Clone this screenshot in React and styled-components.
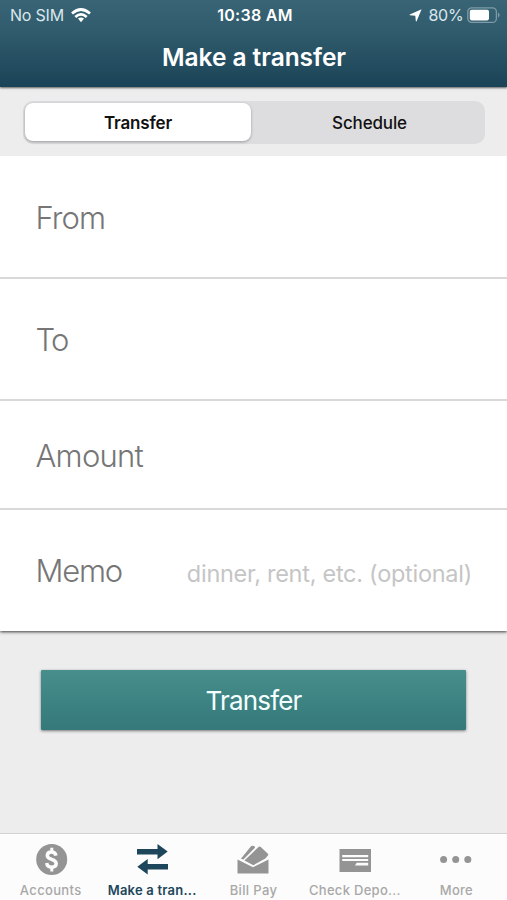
import React from 'react';
import styled, { createGlobalStyle } from 'styled-components';

const GlobalStyle = createGlobalStyle`
  * { box-sizing: border-box; }
  body { margin: 0; background: #ededed; }
  button, input { font: inherit; border: 0; margin: 0; padding: 0; background: none; }
`;

const Screen = styled.div`
  width: 507px;
  height: 900px;
  display: flex;
  flex-direction: column;
  background: #ededed;
  font-family: Inter, 'Liberation Sans', sans-serif;
  overflow: hidden;
`;

const Header = styled.header`
  height: 87px;
  flex: none;
  color: #fff;
  background: linear-gradient(#386475 0%, #305c6d 35%, #1b4357 100%);
  box-shadow: 0 1px 2px rgba(0, 0, 0, 0.6);
`;

const StatusBar = styled.div`
  height: 30px;
  display: grid;
  grid-template-columns: 1fr auto 1fr;
  align-items: center;
  padding: 0 7px 0 10px;
  font-size: 16px;
  line-height: 30px;
`;

const StatusGroup = styled.div`
  display: flex;
  align-items: center;
  justify-content: ${(p) => (p.$end ? 'flex-end' : 'flex-start')};
  gap: ${(p) => (p.$end ? '3.5px' : '7px')};
  color: #dbe7ec;
  letter-spacing: -0.2px;
  svg { flex: none; }
`;

const BatteryLevel = styled.span`
  margin-left: 3px;
`;

const Clock = styled.div`
  font-weight: 600;
  letter-spacing: 0.3px;
`;

const Title = styled.h1`
  margin: 0;
  height: 54px;
  padding-left: 1px;
  text-align: center;
  font-size: 24.5px;
  font-weight: 600;
  line-height: 54px;
  letter-spacing: -0.05px;
`;

const SegmentArea = styled.div`
  height: 69px;
  flex: none;
  padding: 14px 22px 12px 23px;
`;

const Segments = styled.div`
  height: 43px;
  display: grid;
  grid-template-columns: 228px 1fr;
  padding: 2px;
  border-radius: 10px;
  background: #dddddf;
`;

const Segment = styled.button`
  height: 38px;
  padding-top: 1px;
  padding-left: ${(p) => (p.$active ? '0' : '3px')};
  border-radius: 8px;
  color: #111;
  font-size: 17px;
  font-weight: ${(p) => (p.$active ? 600 : 500)};
  letter-spacing: -0.15px;
  background: ${(p) => (p.$active ? '#fff' : 'transparent')};
  box-shadow: ${(p) => (p.$active ? '0 1px 3px rgba(0,0,0,0.3)' : 'none')};
  margin-right: ${(p) => (p.$active ? '2px' : '0')};
`;

const Form = styled.div`
  flex: none;
  background: #fff;
  box-shadow: 0 1px 3px rgba(0, 0, 0, 0.75);
  clip-path: inset(0 0 -6px 0);
`;

const Field = styled.label`
  height: ${(p) => p.$height}px;
  display: flex;
  align-items: center;
  justify-content: space-between;
  padding: ${(p) => (p.$last ? '1px' : '2px')} 35px 0 35.5px;
  border-bottom: ${(p) => (p.$last ? '0' : '2px solid #d9d9d9')};
`;

const FieldName = styled.span`
  color: #767676;
  font-size: 31px;
  font-weight: 300;
  line-height: 40px;
  letter-spacing: ${(p) => p.$spacing}px;
`;

const Hint = styled.span`
  padding-top: 5px;
  color: #c5c5c5;
  font-size: 23.5px;
  font-weight: 400;
  letter-spacing: -0.27px;
`;

const SubmitButton = styled.button`
  flex: none;
  height: 60px;
  margin: 39px 41px 0;
  border-radius: 1px;
  color: #f4ffff;
  font-size: 26px;
  letter-spacing: -0.8px;
  background: linear-gradient(#478e8c, #35797a);
  box-shadow: 0 1px 3px rgba(0, 0, 0, 0.5);
`;

const TabBar = styled.nav`
  height: 67px;
  flex: none;
  margin-top: auto;
  display: grid;
  grid-template-columns: repeat(5, 1fr);
  border-top: 1px solid #d2d2d2;
  background: #fcfcfc;
`;

const Tab = styled.button`
  display: flex;
  flex-direction: column;
  align-items: center;
  padding-top: 9px;
  color: ${(p) => (p.$active ? '#1d465b' : '#949494')};
`;

const TabName = styled.span`
  margin-top: 4px;
  color: ${(p) => (p.$active ? '#1d465b' : '#a8a8a8')};
  font-size: 13px;
  font-weight: ${(p) => (p.$active ? 600 : 500)};
  line-height: 18px;
  letter-spacing: ${(p) => p.$spacing}px;
`;

const WifiIcon = () => (
  <svg width="20" height="15" viewBox="0 0 20 15" fill="none" stroke="#fff" strokeWidth="2.7">
    <path d="M1 5.4 Q10 -2.4 19 5.4" />
    <path d="M4.3 9 Q10 3.9 15.7 9" />
    <path d="M7 10.6 Q10 8.5 13 10.6 L10 14.2Z" fill="#fff" stroke="none" />
  </svg>
);

const LocationIcon = () => (
  <svg width="13" height="13" viewBox="0 0 13 13" fill="#fff">
    <path d="M12.6 .3 L7.6 12.2 Q7.1 12.9 6.8 12.1 L6.3 6.7 L1 6.3 Q.2 6.1 .8 5.6Z" />
  </svg>
);

const BatteryIcon = () => (
  <svg width="33" height="17" viewBox="0 0 33 17">
    <rect x=".8" y=".8" width="28.6" height="14.6" rx="4" fill="none" stroke="#7f9ba7" strokeWidth="1.3" />
    <rect x="2.8" y="2.8" width="19.2" height="10.6" rx="1.8" fill="#fff" />
    <path d="M31 5.5 Q32.6 6.3 32.6 8 Q32.6 9.8 31 10.6Z" fill="#7f9ba7" />
  </svg>
);

const AccountsIcon = () => (
  <svg width="34" height="34" viewBox="0 0 34 34">
    <circle cx="17.7" cy="16.5" r="15.5" fill="currentColor" />
    <path d="M22 12.7 C21.4 10 19.8 9 17.6 9 C15 9 13.3 10.3 13.3 12.5 C13.3 17.4 22.2 15.4 22.2 20.5 C22.2 22.9 20.4 24.2 17.7 24.2 C14.9 24.2 13.1 22.9 12.7 20" fill="none" stroke="#fcfcfc" strokeWidth="3.5" />
    <path d="M17.8 4.8 V9.5 M17.8 23.6 V28.4" stroke="#fcfcfc" strokeWidth="3" />
  </svg>
);

const TransferIcon = () => (
  <svg width="34" height="34" viewBox="0 0 34 34" fill="currentColor">
    <path d="M2 6 H22.5 V1 L32.7 8.6 L22.5 16.2 V11.4 H2Z" />
    <path d="M33 20.9 H12.7 V16 L2.3 23.8 L12.7 31.4 V26.4 H33Z" />
  </svg>
);

const BillIcon = () => (
  <svg width="34" height="34" viewBox="0 0 34 34" fill="currentColor">
    <path d="M1.5 16.5 L17 24.2 L32.5 16.5 V30.5 H1.5Z" />
    <path d="M8.4 17.5 L22.5 4 Q23.6 3 24.8 4.1 L31.9 10.7 Q32.7 11.5 31.9 12.4 L29.4 15.5 L17.4 22.2Z" />
    <path d="M4.9 15.8 L14.6 3.7 Q15.5 2.4 16.8 2.7 L18.4 3.2 Q19.5 3.9 18.7 5L7.4 16.4Z" />
  </svg>
);

const CheckIcon = () => (
  <svg width="34" height="34" viewBox="0 0 34 34">
    <path d="M1.5 6 H33 V29 H1.5Z" fill="currentColor" />
    <path d="M4.2 12 H30.2 V14.2 H4.2Z M4.2 15.9 H30.2 V18 H4.2Z M18.7 19.8 H30.2 V22.4 H17Z" fill="#fcfcfc" />
  </svg>
);

const MoreIcon = () => (
  <svg width="34" height="34" viewBox="0 0 34 34" fill="currentColor">
    <circle cx="4.6" cy="16.5" r="3.5" />
    <circle cx="16.7" cy="16.5" r="3.5" />
    <circle cx="28.8" cy="16.5" r="3.5" />
  </svg>
);

const fields = [
  { name: 'From', height: 123, spacing: -0.9 },
  { name: 'To', height: 122, spacing: -1.8 },
  { name: 'Amount', height: 109, spacing: -0.75 },
  { name: 'Memo', height: 121, spacing: -1.2, hint: 'dinner, rent, etc. (optional)' },
];

const tabs = [
  { name: 'Accounts', Icon: AccountsIcon, spacing: 0.35 },
  { name: 'Make a tran...', Icon: TransferIcon, spacing: 0.22, active: true },
  { name: 'Bill Pay', Icon: BillIcon, spacing: 0.35 },
  { name: 'Check Depo...', Icon: CheckIcon, spacing: 0.3 },
  { name: 'More', Icon: MoreIcon, spacing: 0.2 },
];

export default function App() {
  return (
    <>
      <GlobalStyle />
      <Screen>
        <Header>
          <StatusBar>
            <StatusGroup>No SIM<WifiIcon /></StatusGroup>
            <Clock>10:38 AM</Clock>
            <StatusGroup $end><LocationIcon /><BatteryLevel>80%</BatteryLevel><BatteryIcon /></StatusGroup>
          </StatusBar>
          <Title>Make a transfer</Title>
        </Header>
        <SegmentArea>
          <Segments>
            <Segment $active>Transfer</Segment>
            <Segment>Schedule</Segment>
          </Segments>
        </SegmentArea>
        <Form>
          {fields.map((f) => (
            <Field key={f.name} $height={f.height} $last={Boolean(f.hint)}>
              <FieldName $spacing={f.spacing}>{f.name}</FieldName>
              {f.hint && <Hint>{f.hint}</Hint>}
            </Field>
          ))}
        </Form>
        <SubmitButton>Transfer</SubmitButton>
        <TabBar>
          {tabs.map(({ name, Icon, active, spacing }) => (
            <Tab key={name} $active={active}>
              <Icon />
              <TabName $active={active} $spacing={spacing}>{name}</TabName>
            </Tab>
          ))}
        </TabBar>
      </Screen>
    </>
  );
}
